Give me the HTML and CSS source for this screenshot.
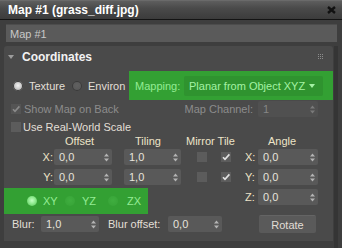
FILE: index.html
```html
<!DOCTYPE html>
<html lang="en">
<head>
    <meta charset="UTF-8">
    <title>Map #1</title>
    <link rel="stylesheet" href="styles.css">
</head>
<body>
    <div class="window">
        <div class="titlebar">
            <span class="title">Map #1 (grass_diff.jpg)</span>
            <svg class="close" width="9" height="8" viewBox="0 0 9 8"><path d="M1 1 L8 7 M8 1 L1 7" stroke="#111" stroke-width="2.4"/></svg>
        </div>
        <div class="name-field">Map #1</div>
        <div class="rollouts">
            <div class="panel">
                <div class="panel-head">
                    <span class="twisty"></span>
                    <span class="panel-title">Coordinates</span>
                    <svg class="grip" width="6" height="6" viewBox="0 0 6 6" fill="#8c8c8c"><rect x="0" y="0" width="1" height="1"/><rect x="2" y="0" width="1" height="1"/><rect x="4" y="0" width="1" height="1"/><rect x="0" y="2" width="1" height="1"/><rect x="2" y="2" width="1" height="1"/><rect x="4" y="2" width="1" height="1"/><rect x="0" y="4" width="1" height="1"/><rect x="2" y="4" width="1" height="1"/><rect x="4" y="4" width="1" height="1"/></svg>
                </div>

                <div class="row row-source">
                    <div class="opt opt-texture"><span class="radio on"></span><span class="lbl">Texture</span></div>
                    <div class="opt opt-environ"><span class="radio"></span><span class="lbl">Environ</span></div>
                    <div class="hl hl-mapping">
                        <span class="lbl">Mapping:</span>
                        <div class="dropdown">Planar from Object XYZ<span class="caret"></span></div>
                    </div>
                </div>

                <div class="row row-back">
                    <span class="check on disabled"><svg width="10" height="10" viewBox="0 0 10 10"><path d="M2 5.2 L4 7.4 L8.4 2.4" fill="none" stroke="#8a8a8a" stroke-width="1.6"/></svg></span>
                    <span class="lbl dim">Show Map on Back</span>
                    <span class="lbl dim channel-label">Map Channel:</span>
                    <div class="spin spin-channel disabled"><span>1</span><svg width="5" height="9" viewBox="0 0 5 9"><path d="M0 3.5 L2.5 0.5 L5 3.5Z M0 5.5 L2.5 8.5 L5 5.5Z" fill="#7a7a7a"/></svg></div>
                </div>

                <div class="row row-scale">
                    <span class="check"></span>
                    <span class="lbl">Use Real-World Scale</span>
                </div>

                <div class="row row-heads">
                    <span class="head h-offset">Offset</span>
                    <span class="head h-tiling">Tiling</span>
                    <span class="head h-mirror">Mirror Tile</span>
                    <span class="head h-angle">Angle</span>
                </div>

                <div class="row row-axis row-x">
                    <span class="axis">X:</span>
                    <div class="spin spin-offset"><span>0,0</span><svg width="5" height="9" viewBox="0 0 5 9"><path d="M0 3.5 L2.5 0.5 L5 3.5Z M0 5.5 L2.5 8.5 L5 5.5Z" fill="#b4b4b4"/></svg></div>
                    <div class="spin spin-tiling"><span>1,0</span><svg width="5" height="9" viewBox="0 0 5 9"><path d="M0 3.5 L2.5 0.5 L5 3.5Z M0 5.5 L2.5 8.5 L5 5.5Z" fill="#b4b4b4"/></svg></div>
                    <span class="check cb-mirror"></span>
                    <span class="check cb-tile on"><svg width="10" height="10" viewBox="0 0 10 10"><path d="M2 5.2 L4 7.4 L8.4 2.4" fill="none" stroke="#e2e2e2" stroke-width="1.6"/></svg></span>
                    <span class="axis-angle">X:</span>
                    <div class="spin spin-angle"><span>0,0</span><svg width="5" height="9" viewBox="0 0 5 9"><path d="M0 3.5 L2.5 0.5 L5 3.5Z M0 5.5 L2.5 8.5 L5 5.5Z" fill="#b4b4b4"/></svg></div>
                </div>

                <div class="row row-axis row-y">
                    <span class="axis">Y:</span>
                    <div class="spin spin-offset"><span>0,0</span><svg width="5" height="9" viewBox="0 0 5 9"><path d="M0 3.5 L2.5 0.5 L5 3.5Z M0 5.5 L2.5 8.5 L5 5.5Z" fill="#b4b4b4"/></svg></div>
                    <div class="spin spin-tiling"><span>1,0</span><svg width="5" height="9" viewBox="0 0 5 9"><path d="M0 3.5 L2.5 0.5 L5 3.5Z M0 5.5 L2.5 8.5 L5 5.5Z" fill="#b4b4b4"/></svg></div>
                    <span class="check cb-mirror"></span>
                    <span class="check cb-tile on"><svg width="10" height="10" viewBox="0 0 10 10"><path d="M2 5.2 L4 7.4 L8.4 2.4" fill="none" stroke="#e2e2e2" stroke-width="1.6"/></svg></span>
                    <span class="axis-angle">Y:</span>
                    <div class="spin spin-angle"><span>0,0</span><svg width="5" height="9" viewBox="0 0 5 9"><path d="M0 3.5 L2.5 0.5 L5 3.5Z M0 5.5 L2.5 8.5 L5 5.5Z" fill="#b4b4b4"/></svg></div>
                </div>

                <div class="row row-z">
                    <div class="hl hl-plane">
                        <div class="opt opt-xy"><span class="radio green on"></span><span class="lbl">XY</span></div>
                        <div class="opt opt-yz"><span class="radio green"></span><span class="lbl">YZ</span></div>
                        <div class="opt opt-zx"><span class="radio green"></span><span class="lbl">ZX</span></div>
                    </div>
                    <span class="axis-angle z-label">Z:</span>
                    <div class="spin spin-angle spin-z"><span>0,0</span><svg width="5" height="9" viewBox="0 0 5 9"><path d="M0 3.5 L2.5 0.5 L5 3.5Z M0 5.5 L2.5 8.5 L5 5.5Z" fill="#b4b4b4"/></svg></div>
                </div>

                <div class="row row-blur">
                    <span class="lbl blur-label">Blur:</span>
                    <div class="spin spin-blur"><span>1,0</span><svg width="5" height="9" viewBox="0 0 5 9"><path d="M0 3.5 L2.5 0.5 L5 3.5Z M0 5.5 L2.5 8.5 L5 5.5Z" fill="#b4b4b4"/></svg></div>
                    <span class="lbl blur-offset-label">Blur offset:</span>
                    <div class="spin spin-blur-offset"><span>0,0</span><svg width="5" height="9" viewBox="0 0 5 9"><path d="M0 3.5 L2.5 0.5 L5 3.5Z M0 5.5 L2.5 8.5 L5 5.5Z" fill="#b4b4b4"/></svg></div>
                    <button class="btn-rotate">Rotate</button>
                </div>
            </div>
            <div class="scrollbar"></div>
        </div>
    </div>
</body>
</html>
```

FILE: styles.css
```css
*{
    box-sizing: border-box;
}
body{
    margin: 0;
    background-color: #3e3e3e;
    font-family: 'Liberation Sans', Arial, sans-serif;
    font-size: 11px;
    color: #e2dfd6;
}
.window{
    width: 342px;
    height: 248px;
    overflow: hidden;
}
.titlebar{
    height: 20px;
    display: flex;
    align-items: center;
    padding-left: 8px;
    background: linear-gradient(#5e5e5e, #4a4a4a 40%, #3c3c3c);
    border-top: 1px solid #6a6a6a;
    border-bottom: 1px solid #141414;
}
.title{
    font-size: 12px;
    font-weight: bold;
    color: #fff;
}
.close{
    margin-left: auto;
    margin-right: 6px;
}
.name-field{
    margin: 4px 5px 0 6px;
    height: 18px;
    line-height: 18px;
    padding-left: 4px;
    background-color: #5a5a5a;
    border-top: 1px solid #4c4c4c;
    color: #c8c8c8;
}
.rollouts{
    display: flex;
    margin-top: 4px;
    height: 202px;
}
.panel{
    margin-left: 4px;
    width: 329px;
    height: 195px;
    background-color: #4a4a4a;
    border-radius: 3px 3px 0 0;
}
.scrollbar{
    margin-left: 1px;
    width: 4px;
    background-color: #353535;
}
.panel-head{
    height: 22px;
    display: flex;
    align-items: center;
}
.twisty{
    margin-left: 4px;
    width: 0;
    height: 0;
    border-left: 3px solid transparent;
    border-right: 3px solid transparent;
    border-top: 4px solid #9c9c9c;
}
.panel-title{
    margin-left: 8px;
    font-size: 12px;
    font-weight: bold;
    color: #f2f2f2;
}
.grip{
    margin-left: auto;
    margin-right: 9px;
}
.row{
    display: flex;
    align-items: center;
}
.lbl{
    white-space: nowrap;
}
.dim{
    color: #8c8c8c;
}

/* radios */
.radio{
    width: 10px;
    height: 10px;
    border-radius: 50%;
    background: radial-gradient(circle at 50% 45%, #616161, #545454);
    box-shadow: inset 0 0 0 1px #3a3a3a;
    flex: none;
}
.radio.on{
    background: radial-gradient(circle at 50% 45%, #f4f4f4 0, #d0d0d0 40%, #8a8a8a 100%);
}
.radio.green{
    background: radial-gradient(circle at 50% 45%, #3fae3f, #36a236);
    box-shadow: none;
}
.radio.green.on{
    background: radial-gradient(circle at 50% 45%, #c4ffc4 0, #8eea8e 45%, #4cbc4c 100%);
}
.opt{
    display: flex;
    align-items: center;
    flex: none;
}
.opt .lbl{
    margin-left: 6px;
}

/* source row */
.row-source{
    margin-top: 3px;
    height: 29px;
}
.opt-texture{
    margin-left: 9px;
    width: 59px;
}
.opt-environ{
    width: 57px;
}
.hl{
    background-color: #33a033;
    color: #94ec94;
}
.hl-mapping{
    width: 204px;
    height: 29px;
    display: flex;
    align-items: center;
    padding-left: 6px;
}
.dropdown{
    margin-left: auto;
    margin-right: 10px;
    width: 139px;
    height: 20px;
    display: flex;
    align-items: center;
    padding-left: 5px;
    background-color: #2f932f;
    color: #a4f2a4;
    border-radius: 2px;
}
.caret{
    margin-left: auto;
    margin-right: 8px;
    width: 0;
    height: 0;
    border-left: 3px solid transparent;
    border-right: 3px solid transparent;
    border-top: 4px solid #a4f2a4;
}

/* checkboxes */
.check{
    width: 10px;
    height: 10px;
    background-color: #5c5c5c;
    flex: none;
    display: flex;
}
.check.disabled{
    background-color: #545454;
}
.row-back{
    height: 18px;
    padding-right: 15px;
}
.row-back .check{
    margin-left: 7px;
}
.row-back .check + .lbl{
    margin-left: 3px;
}
.channel-label{
    margin-left: auto;
}
.spin-channel{
    margin-left: 5px;
    width: 60px;
}
.row-scale{
    height: 17px;
}
.row-scale .check{
    margin-left: 7px;
}
.row-scale .lbl{
    margin-left: 2px;
}

/* offset / tiling / angle table */
.row-heads{
    height: 12px;
    line-height: 12px;
    color: #ede4c8;
}
.head{
    flex: none;
}
.h-offset{
    margin-left: 61px;
    width: 70px;
}
.h-tiling{
    width: 51px;
}
.h-mirror{
    width: 82px;
}
.row-axis{
    height: 16px;
}
.row-x{
    margin-top: 2px;
}
.row-y{
    margin-top: 4px;
}
.axis{
    width: 50px;
    text-align: right;
    padding-right: 1px;
    color: #ede4c8;
}
.axis-angle{
    width: 13px;
    color: #ede4c8;
}
.spin{
    height: 16px;
    display: flex;
    align-items: center;
    padding-left: 5px;
    padding-right: 3px;
    background-color: #595959;
    border-radius: 2px;
    color: #e6e3dc;
    flex: none;
}
.spin svg{
    margin-left: auto;
}
.spin.disabled{
    background-color: #505050;
    color: #868686;
}
.spin-offset{
    width: 58px;
}
.spin-tiling{
    margin-left: 12px;
    width: 57px;
}
.cb-mirror{
    margin-left: 16px;
}
.cb-tile{
    margin-left: 14px;
}
.cb-tile + .axis-angle{
    margin-left: 14px;
}
.spin-angle{
    width: 60px;
}

/* plane + Z row */
.row-z{
    margin-top: 3px;
    height: 26px;
    align-items: flex-start;
}
.hl-plane{
    width: 144px;
    height: 26px;
    display: flex;
    align-items: center;
}
.opt-xy{
    margin-left: 23px;
    width: 38px;
}
.opt-yz{
    width: 43px;
}
.opt-zx .lbl{
    margin-left: 9px;
}
.opt-xy .lbl{
    margin-left: 6px;
}
.opt-yz .lbl{
    margin-left: 7px;
}
.z-label{
    margin-left: 97px;
    line-height: 18px;
}
.spin-z{
    margin-top: 1px;
}

/* blur row */
.row-blur{
    margin-top: 1px;
    height: 18px;
}
.blur-label{
    margin-left: 8px;
    width: 29px;
}
.spin-blur{
    width: 58px;
}
.blur-offset-label{
    margin-left: 9px;
    width: 60px;
}
.spin-blur-offset{
    width: 54px;
}
.btn-rotate{
    margin-left: 37px;
    width: 57px;
    height: 18px;
    padding: 0;
    border: none;
    border-top: 1px solid #646464;
    border-radius: 2px;
    background-color: #5a5a5a;
    color: #e0ddd6;
    font-family: 'Liberation Sans', Arial, sans-serif;
    font-size: 11px;
}
```
